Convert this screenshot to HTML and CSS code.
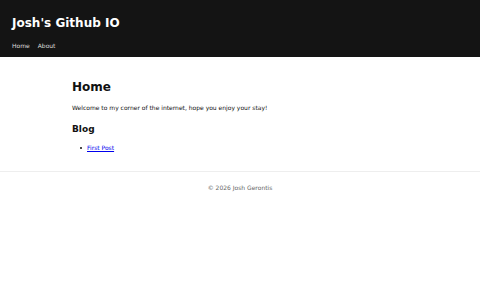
FILE: index.html
```html
<!DOCTYPE html>
<html lang="en">
<head>
    <meta charset="UTF-8">
    <meta name="viewport" content="width=device-width, initial-scale=1.0">
    <title>Josh's Github IO</title>
    <link rel="stylesheet" href="styles.css">
</head>
<body>
    <header class="site-header">
        <h1 class="site-title">Josh's Github IO</h1>
        <nav class="site-nav">
            <a href="#">Home</a>
            <a href="#">About</a>
        </nav>
    </header>
    <main class="content">
        <h1>Home</h1>
        <p>Welcome to my corner of the internet, hope you enjoy your stay!</p>
        <h2>Blog</h2>
        <ul class="post-list">
            <li><a href="#">First Post</a></li>
        </ul>
    </main>
    <footer class="site-footer">
        <p>&copy; 2026 Josh Gerontis</p>
    </footer>
</body>
</html>
```

FILE: styles.css
```css
body {
    margin: 0;
    font-family: "DejaVu Sans", sans-serif;
    font-size: 6px;
    color: #111;
    background: #fff;
}

.site-header {
    background: #141414;
    color: #fff;
    padding: 15px 12px 7px;
}

.site-title {
    margin: 0 0 10px;
    font-size: 12px;
    line-height: 16px;
    font-weight: bold;
}

.site-nav {
    display: flex;
    gap: 8px;
    line-height: 9px;
}

.site-nav a {
    color: #ddd;
    text-decoration: none;
}

.content {
    max-width: 336px;
    margin: 0 auto;
    padding: 22px 0 19px;
}

.content h1 {
    font-size: 12px;
    line-height: 16px;
    margin: 0 0 8px;
}

.content p {
    margin: 0 0 11px;
    line-height: 9px;
}

.content h2 {
    font-size: 9px;
    line-height: 12px;
    margin: 0 0 8px;
}

.post-list {
    margin: 0;
    padding-left: 15px;
    list-style: none;
    line-height: 9px;
}

.post-list li::before {
    content: "";
    display: inline-block;
    width: 2px;
    height: 2px;
    border-radius: 50%;
    background: #111;
    margin: 0 5px 1px -7px;
    vertical-align: middle;
}

.post-list a {
    color: #00e;
}

.site-footer {
    border-top: 1px solid #eee;
    text-align: center;
    color: #666;
    padding: 11px 0;
    line-height: 9px;
}

.site-footer p {
    margin: 0;
}
```
